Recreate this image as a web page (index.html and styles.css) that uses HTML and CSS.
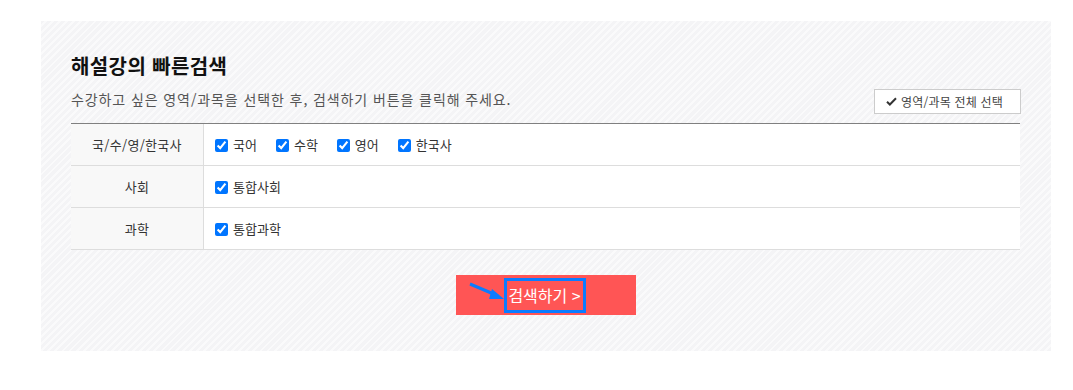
FILE: index.html
```html
<!DOCTYPE html>
<html lang="ko">
<head>
<meta charset="utf-8">
<link rel="stylesheet" href="styles.css">
</head>
<body>
<div class="wrap">
  <section class="panel">
    <h2 class="title">해설강의 빠른검색</h2>
    <div class="desc-row">
      <p class="desc">수강하고 싶은 영역/과목을 선택한 후, 검색하기 버튼을 클릭해 주세요.</p>
      <button class="all-btn" type="button">
        <svg class="chk" viewBox="0 0 12 10" width="11" height="9"><path d="M1 5.2 L4.2 8.4 L11 1.4" fill="none" stroke="#333" stroke-width="2.2"/></svg>
        영역/과목 전체 선택
      </button>
    </div>
    <div class="table">
      <div class="row">
        <div class="th">국/수/영/한국사</div>
        <div class="td">
          <label class="opt"><input type="checkbox" checked>국어</label>
          <label class="opt"><input type="checkbox" checked>수학</label>
          <label class="opt"><input type="checkbox" checked>영어</label>
          <label class="opt"><input type="checkbox" checked>한국사</label>
        </div>
      </div>
      <div class="row">
        <div class="th">사회</div>
        <div class="td">
          <label class="opt"><input type="checkbox" checked>통합사회</label>
        </div>
      </div>
      <div class="row">
        <div class="th">과학</div>
        <div class="td">
          <label class="opt"><input type="checkbox" checked>통합과학</label>
        </div>
      </div>
    </div>
    <div class="btn-row">
      <button class="search" type="button">
        <svg class="arrow" viewBox="0 0 40 20" width="40" height="20"><path d="M2 2 L28 13" stroke="#0a7cff" stroke-width="3" fill="none"/><path d="M24 7 L36 17 L21 17 Z" fill="#0a7cff"/></svg>
        <span class="label">검색하기 &gt;</span>
      </button>
    </div>
  </section>
</div>
</body>
</html>
```

FILE: styles.css
```css
* { box-sizing: border-box; }
html, body { margin: 0; padding: 0; background: #fff; }
body { font-family: "Noto Sans CJK KR", "Noto Sans", sans-serif; color: #333; }
.wrap { padding: 21px 0 0 41px; }
.panel {
  width: 1010px;
  height: 330px;
  padding: 30px 30px 0 30px;
  background-color: #f4f4f6;
  background-image: repeating-linear-gradient(-45deg, #f4f4f6 0px, #f4f4f6 3px, #fafafb 3px, #fafafb 5px);
}
.title {
  margin: 0;
  font-size: 20px;
  font-weight: 700;
  color: #111;
  line-height: 30px;
  letter-spacing: 0.4px;
}
.desc-row {
  display: flex;
  justify-content: space-between;
  align-items: flex-end;
  margin-top: 4px;
  height: 38px;
  padding-bottom: 9px;
}
.desc {
  margin: 3px 0 0 0;
  font-size: 14px;
  color: #555;
  line-height: 22px;
  letter-spacing: 0.9px;
  align-self: flex-start;
}
.all-btn {
  display: flex;
  align-items: center;
  gap: 4px;
  height: 25px;
  width: 147px;
  padding: 0 0 0 11px;
  background: #fff;
  border: 1px solid #ccc;
  font-family: inherit;
  font-size: 12px;
  letter-spacing: 0.2px;
  color: #444;
  cursor: pointer;
}
.table {
  width: 949px;
  border-top: 1px solid #808080;
}
.row {
  display: flex;
  height: 42px;
  border-bottom: 1px solid #ddd;
}
.th {
  width: 133px;
  flex: none;
  background: #f8f8f8;
  border-right: 1px solid #ddd;
  display: flex;
  align-items: center;
  justify-content: center;
  font-size: 13px;
  letter-spacing: 0.3px;
  color: #333;
}
.td {
  flex: 1;
  background: #fff;
  display: flex;
  align-items: center;
  padding-left: 11px;
  gap: 19px;
  font-size: 13px;
  color: #333;
}
.opt {
  display: flex;
  align-items: center;
  gap: 5px;
}
.opt input {
  margin: 2px 0 0 0;
  width: 13px;
  height: 13px;
  accent-color: #0075ff;
}
.btn-row {
  display: flex;
  justify-content: center;
  margin-top: 25px;
}
.search {
  position: relative;
  width: 180px;
  height: 40px;
  background: #ff5555;
  border: none;
  padding: 0;
  display: flex;
  align-items: center;
  justify-content: center;
  font-family: inherit;
  cursor: pointer;
}
.label {
  display: inline-block;
  border: 3px solid #0a7cff;
  color: #fff;
  font-size: 16px;
  line-height: 29px;
  padding: 0 2px 0 1px;
  margin-left: -2px;
}
.arrow {
  position: absolute;
  left: 12px;
  top: 7px;
}
```
